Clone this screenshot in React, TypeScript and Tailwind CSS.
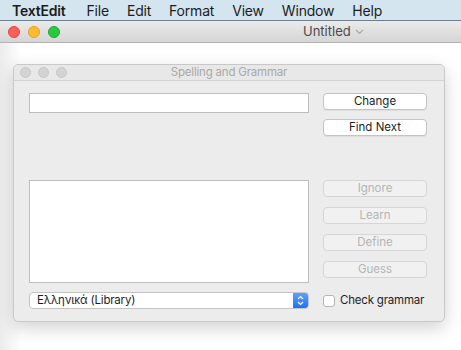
const menuItems = ["File", "Edit", "Format", "View", "Window", "Help"];

const SideButton = ({ label, disabled }: { label: string; disabled?: boolean }) => (
  <div
    className={
      disabled
        ? "h-[17px] w-[104px] rounded-[4px] border border-[#d6d6d6] bg-[#f1f1f1] flex items-center justify-center text-[11.5px] text-[#b4b4b4]"
        : "h-[17px] w-[104px] rounded-[4px] border border-[#c4c4c4] bg-white shadow-[0_1px_0_rgba(0,0,0,0.06)] flex items-center justify-center text-[11.5px] text-[#1e1e1e]"
    }
  >
    {label}
  </div>
);

const App = () => {
  return (
    <div className="w-[461px] h-[350px] overflow-hidden bg-white flex flex-col font-['Inter','Liberation_Sans',sans-serif]">
      {/* menu bar */}
      <div className="h-[21px] shrink-0 bg-[#d4e5ef] border-b border-[#6e7f8c] flex items-center text-[14px] tracking-[-0.2px] text-[#1c1c1c] pl-[12px]">
        <span className="font-semibold mr-[21px]">TextEdit</span>
        {menuItems.map((m) => (
          <span key={m} className="mr-[18px]">
            {m}
          </span>
        ))}
      </div>

      {/* document title bar */}
      <div className="h-[22px] shrink-0 bg-gradient-to-b from-[#ebebeb] to-[#d5d5d5] border-b border-[#b3b3b3] flex items-center relative">
        <div className="flex gap-[8px] pl-[8px]">
          <div className="w-[12px] h-[12px] rounded-full bg-[#fc5f57] border border-[#e14640]" />
          <div className="w-[12px] h-[12px] rounded-full bg-[#fdbc2e] border border-[#dfa023]" />
          <div className="w-[12px] h-[12px] rounded-full bg-[#28c840] border border-[#1dac2c]" />
        </div>
        <div className="ml-[243px] flex items-center text-[13px] text-[#4a4a4a]">
          <span>Untitled</span>
          <svg width="9" height="6" viewBox="0 0 9 6" className="ml-[4px] mt-[1px]">
            <path d="M1 1 L4.5 4.5 L8 1" fill="none" stroke="#a8a8a8" strokeWidth="1.2" />
          </svg>
        </div>
      </div>

      {/* document body */}
      <div className="flex-1 bg-[linear-gradient(to_right,#ececec,#ffffff_22px)] pl-[13px] pt-[21px]">
        <div className="w-[432px] h-[258px] bg-[#ececec] rounded-[5px] border border-[#c9c9c9] shadow-[0_6px_18px_rgba(0,0,0,0.18)] flex flex-col overflow-hidden">
          {/* panel title bar */}
          <div className="h-[16px] shrink-0 bg-[#e8e8e8] border-b border-[#d2d2d2] flex items-center relative">
            <div className="flex gap-[7px] pl-[6px]">
              <div className="w-[11px] h-[11px] rounded-full bg-[#d3d3d3] border border-[#c6c6c6]" />
              <div className="w-[11px] h-[11px] rounded-full bg-[#d3d3d3] border border-[#c6c6c6]" />
              <div className="w-[11px] h-[11px] rounded-full bg-[#d3d3d3] border border-[#c6c6c6]" />
            </div>
            <div className="absolute inset-0 flex items-center justify-center text-[11.5px] tracking-[-0.2px] text-[#a9a9a9]">
              Spelling and Grammar
            </div>
          </div>

          {/* panel body */}
          <div className="flex-1 pl-[15px] pt-[12px]">
            <div className="flex gap-[14px]">
              <div className="w-[280px] flex flex-col">
                <div className="h-[20px] bg-white border border-[#bdbdbd]" />
                <div className="h-[103px] mt-[67px] bg-white border border-[#bdbdbd]" />
              </div>
              <div className="flex flex-col">
                <SideButton label="Change" />
                <div className="mt-[9px]">
                  <SideButton label="Find Next" />
                </div>
                <div className="mt-[44px] flex flex-col gap-[10px]">
                  <SideButton label="Ignore" disabled />
                  <SideButton label="Learn" disabled />
                  <SideButton label="Define" disabled />
                  <SideButton label="Guess" disabled />
                </div>
              </div>
            </div>

            <div className="flex items-center gap-[14px] mt-[9px]">
              <div className="w-[280px] h-[17px] rounded-[4px] border border-[#c4c4c4] bg-white flex items-center overflow-hidden">
                <span className="flex-1 pl-[7px] text-[11.5px] tracking-[-0.2px] text-[#1e1e1e]">Ελληνικά (Library)</span>
                <div className="w-[15px] h-full bg-gradient-to-b from-[#5aa0fb] to-[#1a74f4] flex items-center justify-center">
                  <svg width="7" height="11" viewBox="0 0 7 11">
                    <path d="M1 4 L3.5 1.5 L6 4 M1 7 L3.5 9.5 L6 7" fill="none" stroke="#ffffff" strokeWidth="1.2" />
                  </svg>
                </div>
              </div>
              <div className="flex items-center">
                <div className="w-[12px] h-[12px] rounded-[3px] border border-[#b5b5b5] bg-white" />
                <span className="ml-[5px] text-[11.5px] tracking-[-0.2px] text-[#1e1e1e]">Check grammar</span>
              </div>
            </div>
          </div>
        </div>
      </div>
    </div>
  );
};

export default App;
